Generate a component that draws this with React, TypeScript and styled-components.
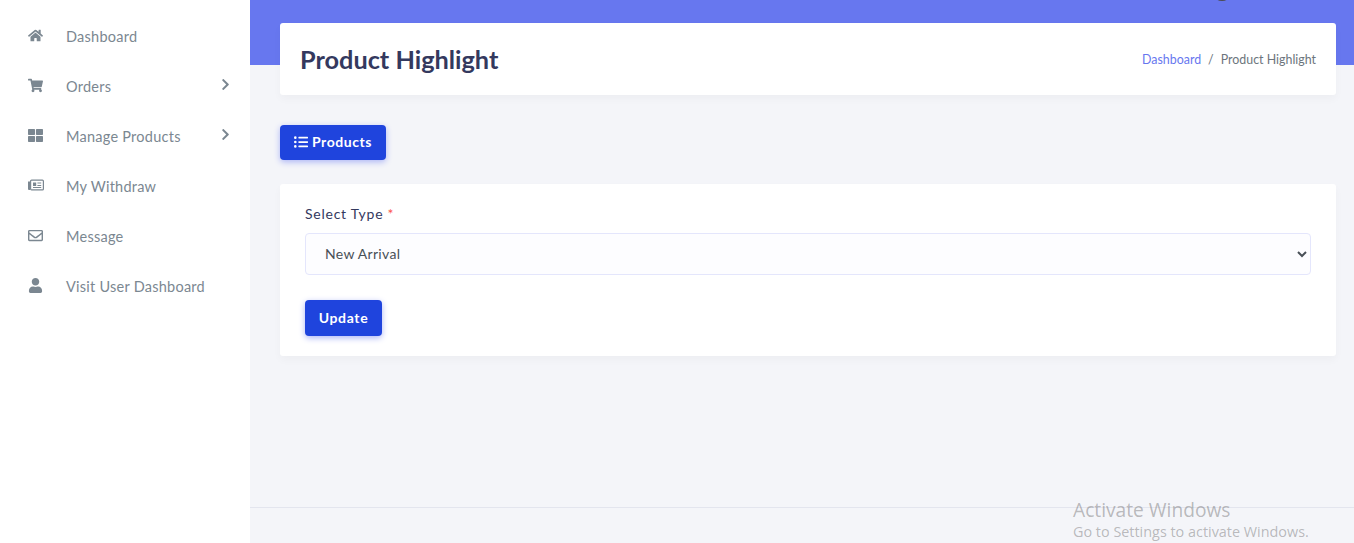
import React from "react";
import styled, { createGlobalStyle } from "styled-components";
import { FaHome, FaShoppingCart, FaThLarge, FaRegEnvelope, FaUser, FaChevronRight, FaListUl } from "react-icons/fa";

const Global = createGlobalStyle`
  html, body { margin: 0; padding: 0; height: 100%; overflow: hidden; }
  body { font-family: "Lato", "Noto Sans", sans-serif; background: #f4f5f9; }
`;

const Shell = styled.div`
  display: flex;
  width: 1354px;
  height: 543px;
  position: relative;
  overflow: hidden;
`;

const Sidebar = styled.nav`
  width: 250px;
  flex: none;
  background: #fff;
  padding-top: 11px;
  box-sizing: border-box;
`;

const NavRow = styled.div`
  height: 50px;
  display: flex;
  align-items: center;
  padding: 0 18px 0 28px;
  color: #7b8791;
  font-size: 14.5px;
  letter-spacing: 0.25px;
`;

const NavIcon = styled.span`
  width: 38px;
  flex: none;
  display: flex;
  align-items: center;
  justify-content: flex-start;
  font-size: 15px;
  position: relative;
  top: -1px;
`;

const NavLabel = styled.span`
  flex: 1;
  line-height: 1;
  padding-top: 3px;
`;

const NavArrow = styled.span`
  display: flex;
  font-size: 13px;
  position: relative;
  top: -2px;
`;

const Main = styled.main`
  flex: 1;
  display: flex;
  flex-direction: column;
  min-width: 0;
  position: relative;
`;

const Banner = styled.div`
  height: 65px;
  flex: none;
  background: #6777ef;
  position: relative;
  margin-bottom: -42px;
`;

const AvatarTip = styled.span`
  position: absolute;
  left: 967px;
  top: -4px;
  width: 10px;
  height: 5px;
  border-radius: 50%;
  background: #4b4b52;
`;

const Content = styled.div`
  flex: 1;
  display: flex;
  flex-direction: column;
  align-items: flex-start;
  padding: 0 18px 0 30px;
  position: relative;
`;

const TitleCard = styled.header`
  align-self: stretch;
  height: 72px;
  background: #fff;
  border-radius: 3px;
  box-shadow: 0 4px 8px rgba(0, 0, 0, 0.03);
  display: flex;
  align-items: center;
  justify-content: space-between;
  padding: 0 20px;
  margin-bottom: 30px;
`;

const Title = styled.h1`
  margin: 0;
  font-size: 25.3px;
  font-weight: 700;
  color: #34395e;
`;

const Crumbs = styled.div`
  display: flex;
  gap: 7px;
  font-size: 12.4px;
  color: #6c757d;
`;

const CrumbLink = styled.span`
  color: #6777ef;
`;

const Button = styled.button`
  border: 0;
  background: #1f44dd;
  color: #fff;
  font-family: inherit;
  font-weight: 700;
  font-size: 14px;
  border-radius: 4px;
  box-shadow: 0 2px 6px #acb5f6;
  display: inline-flex;
  align-items: center;
  justify-content: center;
  padding: 0 0 2px;
`;

const ProductsButton = styled(Button)`
  width: 106px;
  height: 35px;
  margin-bottom: 24px;
  gap: 4px;
  letter-spacing: 0.55px;
`;

const UpdateButton = styled(Button)`
  width: 77px;
  height: 36px;
  letter-spacing: 0.65px;
`;

const FormCard = styled.section`
  align-self: stretch;
  height: 172px;
  box-sizing: border-box;
  background: #fff;
  border-radius: 3px;
  box-shadow: 0 4px 8px rgba(0, 0, 0, 0.03);
  padding: 21px 25px;
`;

const Label = styled.label`
  display: block;
  font-size: 14px;
  letter-spacing: 0.75px;
  line-height: 18px;
  color: #34395e;
  margin-bottom: 10px;
`;

const Required = styled.span`
  color: #fc544b;
`;

const Select = styled.select`
  display: block;
  width: 100%;
  height: 42px;
  box-sizing: border-box;
  border: 1px solid #e4e6fc;
  border-radius: 4px;
  background: #fdfdff;
  color: #495057;
  font-family: inherit;
  font-size: 14px;
  letter-spacing: 0.3px;
  padding: 0 15px 2px;
  margin-bottom: 25px;
  outline: none;
`;

const Footer = styled.footer`
  margin-top: auto;
  height: 35px;
  flex: none;
  border-top: 1px solid #e3e5ee;
`;

const Watermark = styled.div`
  position: absolute;
  left: 1073px;
  top: 498px;
  font-family: "Open Sans", "Noto Sans", sans-serif;
  color: rgba(90, 90, 90, 0.4);
  pointer-events: none;
`;

const WatermarkTitle = styled.div`
  font-size: 19.2px;
  line-height: 23px;
`;

const WatermarkText = styled.div`
  font-size: 14.4px;
  line-height: 22px;
`;

const WithdrawIcon = () => (
  <svg width="16" height="12" viewBox="0 0 16 12" fill="none" aria-hidden="true">
    <path d="M0 2.5h2V11H1a1 1 0 0 1-1-1V2.5z" fill="currentColor" />
    <rect x="2.6" y="1.1" width="12.8" height="9.8" rx="1" stroke="currentColor" strokeWidth="1.2" />
    <path d="M5 3.5h3.2v3.5H5zM9.4 3.5h3.8v1H9.4zM9.4 6h3.8v1H9.4zM5 8h8.2v1H5z" fill="currentColor" />
  </svg>
);

const items = [
  { icon: <FaHome />, label: "Dashboard" },
  { icon: <FaShoppingCart />, label: "Orders", arrow: true },
  { icon: <FaThLarge />, label: "Manage Products", arrow: true },
  { icon: <WithdrawIcon />, label: "My Withdraw" },
  { icon: <FaRegEnvelope />, label: "Message" },
  { icon: <FaUser />, label: "Visit User Dashboard" },
];

export default function App() {
  return (
    <Shell>
      <Global />
      <Sidebar>
        {items.map((it) => (
          <NavRow key={it.label}>
            <NavIcon>{it.icon}</NavIcon>
            <NavLabel>{it.label}</NavLabel>
            {it.arrow && (
              <NavArrow>
                <FaChevronRight />
              </NavArrow>
            )}
          </NavRow>
        ))}
      </Sidebar>
      <Main>
        <Banner>
          <AvatarTip />
        </Banner>
        <Content>
          <TitleCard>
            <Title>Product Highlight</Title>
            <Crumbs>
              <CrumbLink>Dashboard</CrumbLink>
              <span>/</span>
              <span>Product Highlight</span>
            </Crumbs>
          </TitleCard>
          <ProductsButton>
            <FaListUl />
            Products
          </ProductsButton>
          <FormCard>
            <Label>
              Select Type <Required>*</Required>
            </Label>
            <Select defaultValue="new">
              <option value="new">New Arrival</option>
            </Select>
            <UpdateButton>Update</UpdateButton>
          </FormCard>
        </Content>
        <Footer />
      </Main>
      <Watermark>
        <WatermarkTitle>Activate Windows</WatermarkTitle>
        <WatermarkText>Go to Settings to activate Windows.</WatermarkText>
      </Watermark>
    </Shell>
  );
}
